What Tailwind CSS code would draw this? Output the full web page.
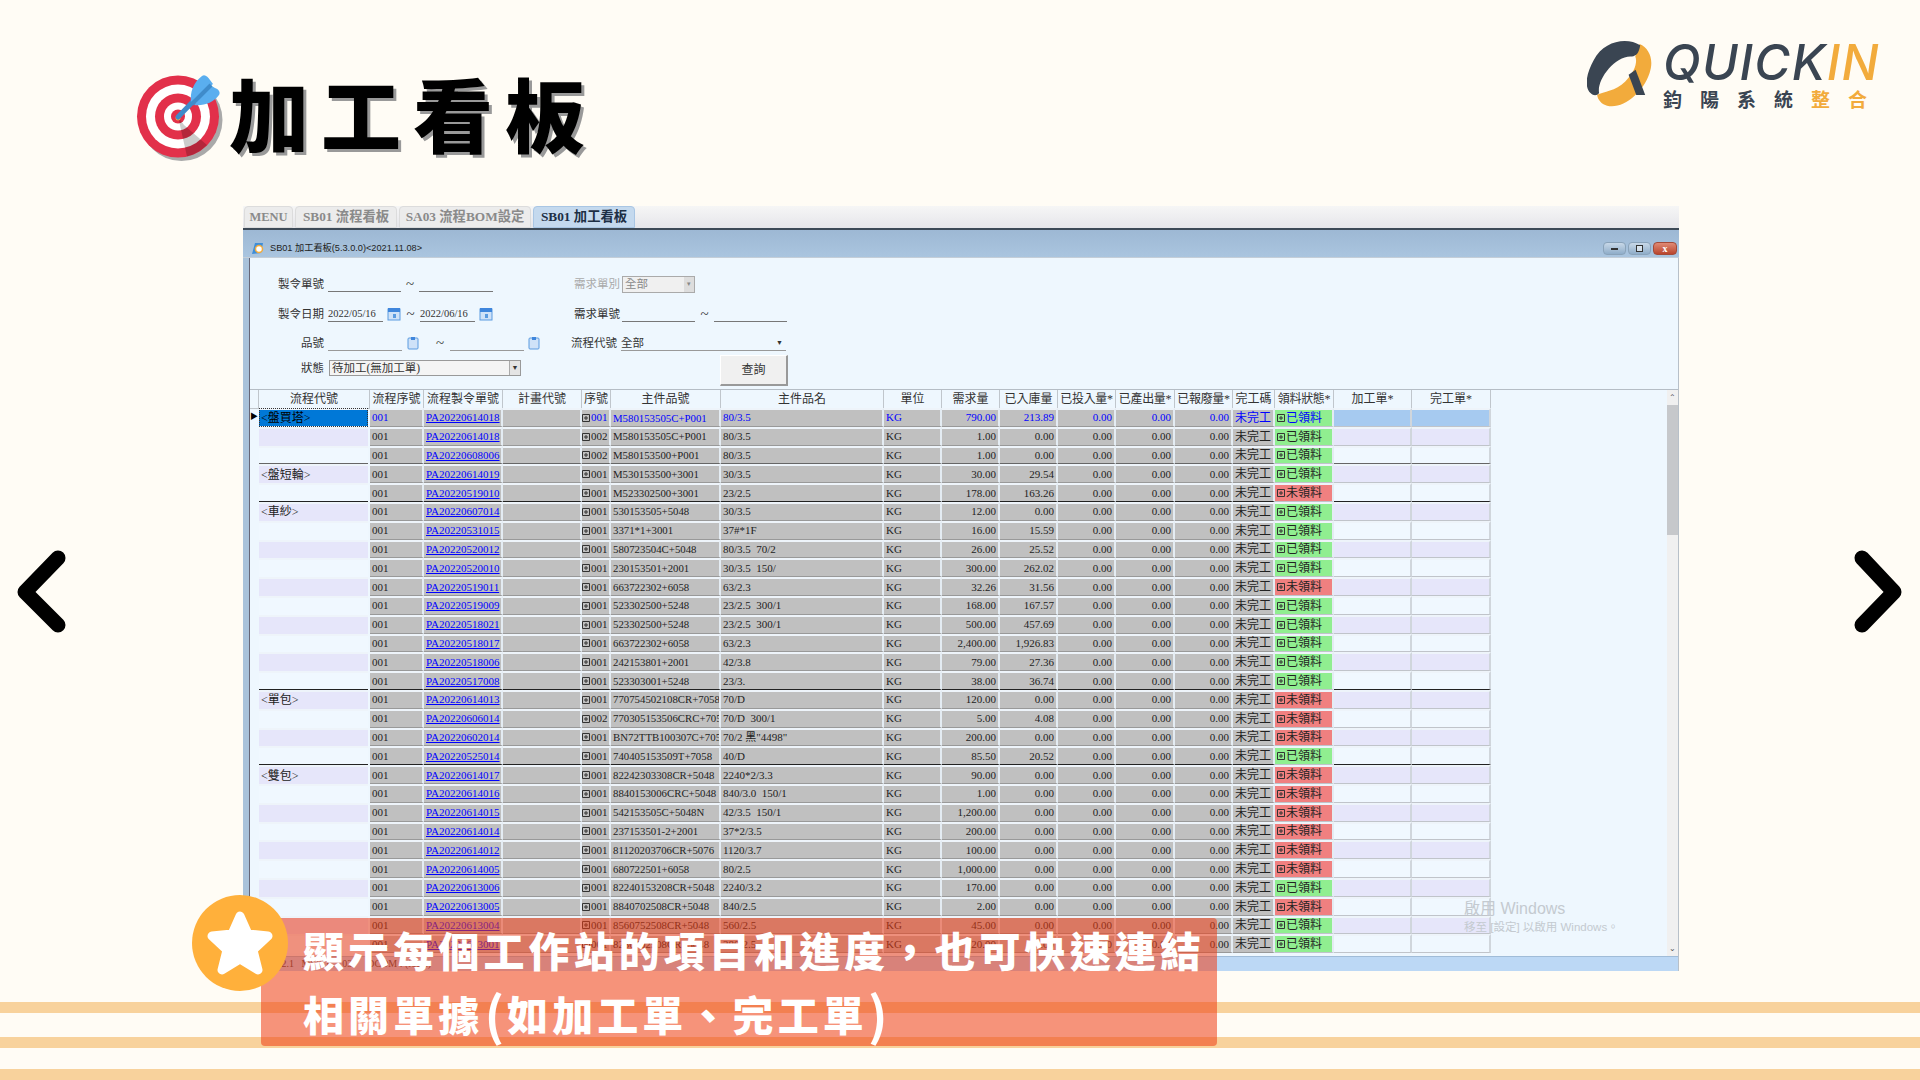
<!DOCTYPE html>
<html lang="zh-Hant">
<head>
<meta charset="utf-8">
<script src="https://cdn.jsdelivr.net/npm/@tailwindcss/browser@4"></script>
</head>
<body class="m-0">
<div class="relative w-[1920px] h-[1080px] overflow-hidden bg-[#fffcf5] [font-family:'Noto_Sans_CJK_TC',sans-serif]">

  <!-- stripes -->
  <div class="absolute left-0 right-0 top-[1002px] h-[11px] bg-[#f8d29c]"></div>
  <div class="absolute left-0 right-0 top-[1037px] h-[11px] bg-[#f8d29c]"></div>
  <div class="absolute left-0 right-0 top-[1069px] h-[11px] bg-[#f8d29c]"></div>

  <!-- header -->
  <header class="relative h-[206px] flex justify-between items-start">
    <div class="flex items-center pl-[130px] pt-[65px]">
      <svg width="100" height="100" viewBox="130 65 100 100" class="shrink-0">
        <circle cx="181.5" cy="120" r="41" fill="#a9a9a9"/>
        <circle cx="178" cy="116.500" r="41" fill="#e2304a"/>
        <circle cx="178" cy="116.500" r="32" fill="#fff"/>
        <circle cx="178" cy="116.500" r="23" fill="#e2304a"/>
        <circle cx="178" cy="116.500" r="14" fill="#fff"/>
        <circle cx="178" cy="116.500" r="7" fill="#e2304a"/>
        <path d="M178 116.500 L184 125 L207 145 A41 41 0 0 1 187 156.500 Z" fill="#000" opacity=".2"/>
        <circle cx="178" cy="118" r="2.500" fill="#f5a53a"/>
        <path d="M178 117 L209 85" stroke="#3f8bca" stroke-width="5" stroke-linecap="round"/>
        <path d="M191 102 C190 92 193 83 202 76 C205 74 208 77 210 80 L213 84 Z" fill="#5aaeef"/>
        <path d="M194 105 C204 106 213 103 219 95 C221 92 218 89 215 88 L210 85 Z" fill="#5aaeef"/>
        <path d="M192 104 L211 85" stroke="#3f8bca" stroke-width="4"/>
      </svg>
      <h1 class="-ml-[1px] -mt-[9px] text-[80px] leading-[100px] font-black tracking-[12px] text-black [text-shadow:3px_3px_0_#999] whitespace-nowrap">加工看板</h1>
    </div>
    <div class="flex pt-[40px] w-[333px]">
      <svg width="65" height="67" viewBox="80 60 195 202" class="shrink-0">
        <path d="M238 72 C268 85 282 120 268 160 C250 215 190 270 140 258 C125 254 112 242 110 225 C130 215 165 215 195 185 C225 155 232 125 225 110 Z" fill="#f2ab3c"/>
        <path d="M240 76 C200 50 130 62 100 120 C78 160 70 200 90 220 C100 230 110 228 116 220 C108 180 165 105 215 110 C228 108 236 100 240 76 Z" fill="#3a4552"/>
        <path d="M205 165 L226 150 L255 226 L228 226 Z" fill="#3a4552"/>
      </svg>
      <div class="ml-[11px] flex flex-col">
        <div class="h-[49px] text-[49px] leading-[45px] italic font-medium text-[#3a4552] [font-family:Inter,sans-serif] tracking-[1.400px] whitespace-nowrap">QUICK<span class="text-[#f2ab3c]">IN</span></div>
        <div class="text-[19px] leading-[20px] font-bold text-[#3a4552] tracking-[18px] whitespace-nowrap">鈞陽系統<span class="text-[#f2ab3c]">整合</span></div>
      </div>
    </div>
  </header>

  <!-- window screenshot -->
  <section class="relative ml-[243px] w-[1436px] h-[765px] flex flex-col text-[#222] [font-family:'Liberation_Serif','Noto_Sans_CJK_TC',serif]">
    <!-- tabs -->
    <div class="h-[24px] shrink-0 flex items-end bg-gradient-to-b from-[#f6f6f6] to-[#e6e6ea] pl-px gap-[2px] border-b-2 border-[#3d4a57]">
      <div class="w-[49px] h-[22px] flex items-center justify-center text-[12.500px] font-bold text-[#8a8a8a] bg-[#ececec] border border-[#dcdcdc] rounded-t-sm">MENU</div>
      <div class="w-[102px] h-[22px] flex items-center justify-center text-[13.300px] font-bold text-[#8a8a8a] bg-[#ececec] border border-[#dcdcdc] rounded-t-sm whitespace-nowrap">SB01 流程看板</div>
      <div class="w-[132px] h-[22px] flex items-center justify-center text-[13.300px] font-bold text-[#8a8a8a] bg-[#ececec] border border-[#dcdcdc] rounded-t-sm whitespace-nowrap">SA03 流程BOM設定</div>
      <div class="w-[102px] h-[22px] flex items-center justify-center text-[13.300px] font-bold text-[#1d2f45] bg-[#c4d9ee] border border-[#a9c6e4] rounded-t-sm whitespace-nowrap">SB01 加工看板</div>
    </div>
    <!-- title bar -->
    <div class="h-[28px] shrink-0 flex items-center bg-gradient-to-b from-[#9db8d4] to-[#aac5df] pt-[10px] pl-[8px] pr-[2px] border-b border-[#c4ced8]">
      <svg width="14" height="14" viewBox="0 0 14 14" class="shrink-0"><path d="M4 1 L12 1 L10 11 L1 12 Z" fill="#3f8ed8"/><circle cx="8" cy="7" r="3.500" fill="#fff" stroke="#f2ab3c" stroke-width="1.500"/></svg>
      <span class="ml-[5px] text-[9.200px] text-[#222] [font-family:'Liberation_Sans','Noto_Sans_CJK_TC',sans-serif] whitespace-nowrap">SB01 加工看板(5.3.0.0)&lt;2021.11.08&gt;</span>
      <div class="ml-auto flex gap-[2px]">
        <div class="w-[23px] h-[13px] rounded-sm bg-gradient-to-b from-[#c8d8e8] to-[#8fadc9] border border-[#8aa3ba] flex items-center justify-center"><div class="w-[7px] h-[2px] bg-[#333]"></div></div>
        <div class="w-[23px] h-[13px] rounded-sm bg-gradient-to-b from-[#c8d8e8] to-[#8fadc9] border border-[#8aa3ba] flex items-center justify-center"><div class="w-[7px] h-[7px] border border-[#333] bg-white/50"></div></div>
        <div class="w-[24px] h-[13px] rounded-sm bg-gradient-to-b from-[#e08a74] to-[#b9442c] border border-[#a34a38] flex items-center justify-center text-white text-[10px] leading-none font-bold">x</div>
      </div>
    </div>

    <div class="flex-1 min-h-0 flex">
      <!-- left frame -->
      <div class="w-[7px] shrink-0 bg-[#a9c2da] border-r border-[#667]"></div>
      <div class="flex-1 min-w-0 flex flex-col border-r border-[#b7c0c9]">
        <!-- form -->
        <div class="h-[132px] shrink-0 bg-[#eef7fe] border-b border-[#b5bdc5] pt-[18px] text-[11.500px] leading-[16px] text-[#333] flex flex-col">
          <div class="h-[16px] flex items-center">
            <span class="w-[74px] text-right whitespace-nowrap">製令單號</span>
            <span class="ml-[4px] w-[73px] h-[16px] border-b border-[#777]"></span>
            <span class="w-[18px] text-center text-[15px]">~</span>
            <span class="w-[74px] h-[16px] border-b border-[#777]"></span>
            <span class="ml-[81px] w-[44px] text-right text-[#aaa] whitespace-nowrap">需求單別</span>
            <span class="ml-[4px] w-[73px] h-[17px] bg-[#f0f0f0] border border-[#aaa] flex items-center justify-between pl-[2px] text-[#888]">全部<span class="w-[10px] h-[15px] bg-[#ddd] text-[7px] text-center leading-[15px]">▾</span></span>
          </div>
          <div class="h-[16px] mt-[14px] flex items-center">
            <span class="w-[74px] text-right whitespace-nowrap">製令日期</span>
            <span class="ml-[4px] w-[55px] h-[16px] border-b border-[#777] text-[10.500px]">2022/05/16</span>
            <svg class="ml-[4px] shrink-0" width="14" height="14" viewBox="0 0 14 14"><rect x="1" y="2" width="12" height="11" fill="#cfe2f8" stroke="#5b9be0"/><rect x="1" y="1" width="12" height="4" fill="#3f86dc"/><rect x="6" y="7" width="3" height="4" fill="#5b9be0"/></svg>
            <span class="w-[19px] text-center text-[15px]">~</span>
            <span class="w-[55px] h-[16px] border-b border-[#777] text-[10.500px]">2022/06/16</span>
            <svg class="ml-[4px] shrink-0" width="14" height="14" viewBox="0 0 14 14"><rect x="1" y="2" width="12" height="11" fill="#cfe2f8" stroke="#5b9be0"/><rect x="1" y="1" width="12" height="4" fill="#3f86dc"/><rect x="6" y="7" width="3" height="4" fill="#5b9be0"/></svg>
            <span class="ml-[81px] w-[44px] text-right whitespace-nowrap">需求單號</span>
            <span class="ml-[4px] w-[73px] h-[16px] border-b border-[#777]"></span>
            <span class="w-[19px] text-center text-[15px]">~</span>
            <span class="w-[73px] h-[16px] border-b border-[#777]"></span>
          </div>
          <div class="h-[16px] mt-[13px] flex items-center">
            <span class="w-[74px] text-right whitespace-nowrap">品號</span>
            <span class="ml-[4px] w-[74px] h-[16px] border-b border-[#999]"></span>
            <svg class="ml-[5px] shrink-0" width="12" height="14" viewBox="0 0 12 14"><rect x="1" y="2" width="10" height="11" rx="1" fill="#cfe2f8" stroke="#5b9be0"/><rect x="4" y="1" width="4" height="3" fill="#3f86dc"/></svg>
            <span class="w-[31px] pl-[11px] text-center text-[15px]">~</span>
            <span class="w-[74px] h-[16px] border-b border-[#999]"></span>
            <svg class="ml-[4px] shrink-0" width="12" height="14" viewBox="0 0 12 14"><rect x="1" y="2" width="10" height="11" rx="1" fill="#cfe2f8" stroke="#5b9be0"/><rect x="4" y="1" width="4" height="3" fill="#3f86dc"/></svg>
            <span class="ml-[28px] w-[49px] text-right whitespace-nowrap">流程代號</span>
            <span class="ml-[4px] w-[165px] h-[16px] border-b border-[#999] flex items-center justify-between pr-[3px]">全部<span class="text-[7px]">▼</span></span>
          </div>
          <div class="h-[16px] mt-[9px] flex items-start">
            <span class="w-[74px] text-right whitespace-nowrap">狀態</span>
            <span class="ml-[5px] w-[192px] h-[16px] bg-[#f4f4f4] border border-[#999] flex items-center justify-between pl-[2px]">待加工(無加工單)<span class="w-[11px] h-[14px] bg-[#e4e4e4] border-l border-[#aaa] text-[7px] text-center leading-[14px]">▼</span></span>
            <span class="ml-[199px] -mt-[5px] w-[68px] h-[31px] bg-[#f0f0f0] border-r-2 border-b-2 border-[#999] border-t border-l border-t-[#fff] border-l-[#fff] flex items-center justify-center text-[12px]">查詢</span>
          </div>
        </div>

        <!-- table + scrollbar -->
        <div class="flex-1 min-h-0 flex bg-[#eef7fe]">
          <div class="flex-1 min-w-0">
            <div class="grid grid-cols-[9px_111px_54px_79px_79px_29px_110px_163px_58px_58px_58px_58px_59px_58px_42px_59px_78px_79px] h-[18px] text-[12px] text-[#333] text-center leading-[18px] whitespace-nowrap">
              <div class="border-r border-b border-[#c0c6cc]"></div>
              <div class="border-r border-b border-[#c0c6cc]">流程代號</div>
              <div class="border-r border-b border-[#c0c6cc]">流程序號</div>
              <div class="border-r border-b border-[#c0c6cc]">流程製令單號</div>
              <div class="border-r border-b border-[#c0c6cc]">計畫代號</div>
              <div class="border-r border-b border-[#c0c6cc]">序號</div>
              <div class="border-r border-b border-[#c0c6cc]">主件品號</div>
              <div class="border-r border-b border-[#c0c6cc]">主件品名</div>
              <div class="border-r border-b border-[#c0c6cc]">單位</div>
              <div class="border-r border-b border-[#c0c6cc]">需求量</div>
              <div class="border-r border-b border-[#c0c6cc]">已入庫量</div>
              <div class="border-r border-b border-[#c0c6cc] tracking-[-0.3px]">已投入量*</div>
              <div class="border-r border-b border-[#c0c6cc] tracking-[-0.3px]">已產出量*</div>
              <div class="border-r border-b border-[#c0c6cc] tracking-[-0.3px]">已報廢量*</div>
              <div class="border-r border-b border-[#c0c6cc]">完工碼</div>
              <div class="border-r border-b border-[#c0c6cc] tracking-[-0.3px]">領料狀態*</div>
              <div class="border-r border-b border-[#c0c6cc]">加工單*</div>
              <div class="border-r border-b border-[#c0c6cc]">完工單*</div>
            </div>
            <div id="rows"></div>
          </div>
          <!-- scrollbar -->
          <div class="relative w-[11px] shrink-0 bg-[#f0f0f0] flex flex-col items-center text-[8px] leading-[15px] text-[#555]">
            <span class="h-[15px]">⌃</span>
            <div class="w-full h-[130px] bg-[#c6c8cb]"></div>
            <span class="mt-auto h-[15px]">⌄</span>
          </div>
        </div>
        <!-- status band -->
        <div class="h-[15px] shrink-0 bg-[#bcd8f5] border-t border-[#a0bcd8] text-[10px] leading-[14px] pl-[24px] text-[#444] whitespace-nowrap">8.2.1 &nbsp; MSSQL / 03 &nbsp;&nbsp;&nbsp;&nbsp; DCOM : (local)</div>
      </div>
    </div>

    <!-- activation watermark -->
    <div class="absolute left-[1221px] top-[693px] text-[#c4cad0] [font-family:'Liberation_Sans','Noto_Sans_CJK_TC',sans-serif] whitespace-nowrap">
      <div class="text-[16px] leading-[20px]">啟用 Windows</div>
      <div class="text-[11.500px] leading-[16px]">移至 [設定] 以啟用 Windows。</div>
    </div>
  </section>

  <!-- callout -->
  <div class="absolute left-[261px] top-[918px] w-[956px] h-[128px] rounded-[4px] bg-[#ee3c14]/55 pl-[42px] text-white text-[41px] font-black leading-[64px] tracking-[4.100px] whitespace-nowrap">
    <div class="-mt-[1px]">顯示每個工作站的項目和進度，也可快速連結</div>
    <div class="h-[64px] flex items-center">相關單據<span class="text-[52px] font-bold leading-none tracking-[0px] ml-[1px] mr-[3px]">(</span>如加工單、完工單<span class="text-[52px] font-bold leading-none tracking-[0px]">)</span></div>
  </div>
  <div class="absolute left-[192px] top-[895px] w-[96px] h-[96px] rounded-full bg-[#ffb03b] flex items-center justify-center">
    <svg width="70" height="66" viewBox="0 0 70 66"><path d="M35 6 L43 24 L63 26 L48 40 L53 60 L35 49 L17 60 L22 40 L7 26 L27 24 Z" fill="#fff" stroke="#fff" stroke-width="9" stroke-linejoin="round"/></svg>
  </div>

  <!-- nav chevrons -->
  <svg class="absolute left-[10px] top-[545px]" width="70" height="95" viewBox="0 0 70 95"><path d="M48 13 L15 47 L48 80" fill="none" stroke="#000" stroke-width="15" stroke-linecap="round" stroke-linejoin="round"/></svg>
  <svg class="absolute left-[1839px] top-[545px]" width="70" height="95" viewBox="0 0 70 95"><path d="M23 13 L55 47 L23 80" fill="none" stroke="#000" stroke-width="15" stroke-linecap="round" stroke-linejoin="round"/></svg>
</div>

<script>
var G='已',N='未';
var data=[
['<盤買塔>','PA20220614018','001','M580153505C+P001','80/3.5','790.00','213.89',G],
['','PA20220614018','002','M580153505C+P001','80/3.5','1.00','0.00',G],
['','PA20220608006','002','M580153500+P001','80/3.5','1.00','0.00',G],
['<盤短輪>','PA20220614019','001','M530153500+3001','30/3.5','30.00','29.54',G],
['','PA20220519010','001','M523302500+3001','23/2.5','178.00','163.26',N],
['<車紗>','PA20220607014','001','530153505+5048','30/3.5','12.00','0.00',G],
['','PA20220531015','001','3371*1+3001','37#*1F','16.00','15.59',G],
['','PA20220520012','001','580723504C+5048','80/3.5  70/2','26.00','25.52',G],
['','PA20220520010','001','230153501+2001','30/3.5  150/','300.00','262.02',G],
['','PA20220519011','001','663722302+6058','63/2.3','32.26','31.56',N],
['','PA20220519009','001','523302500+5248','23/2.5  300/1','168.00','167.57',G],
['','PA20220518021','001','523302500+5248','23/2.5  300/1','500.00','457.69',G],
['','PA20220518017','001','663722302+6058','63/2.3','2,400.00','1,926.83',G],
['','PA20220518006','001','242153801+2001','42/3.8','79.00','27.36',G],
['','PA20220517008','001','523303001+5248','23/3.','38.00','36.74',G],
['<單包>','PA20220614013','001','770754502108CR+7058','70/D','120.00','0.00',N],
['','PA20220606014','002','770305153506CRC+705','70/D  300/1','5.00','4.08',N],
['','PA20220602014','001','BN72TTB100307C+705','70/2 黑"4498"','200.00','0.00',N],
['','PA20220525014','001','740405153509T+7058','40/D','85.50','20.52',G],
['<雙包>','PA20220614017','001','82242303308CR+5048','2240*2/3.3','90.00','0.00',N],
['','PA20220614016','001','8840153006CRC+5048','840/3.0  150/1','1.00','0.00',N],
['','PA20220614015','001','542153505C+5048N','42/3.5  150/1','1,200.00','0.00',N],
['','PA20220614014','001','237153501-2+2001','37*2/3.5','200.00','0.00',N],
['','PA20220614012','001','81120203706CR+5076','1120/3.7','100.00','0.00',N],
['','PA20220614005','001','680722501+6058','80/2.5','1,000.00','0.00',N],
['','PA20220613006','001','82240153208CR+5048','2240/3.2','170.00','0.00',G],
['','PA20220613005','001','8840702508CR+5048','840/2.5','2.00','0.00',N],
['','PA20220613004','001','8560752508CR+5048','560/2.5','45.00','0.00',G],
['','PA20220613001','001','8280702508CR+5048','280/2.5','20.00','0.00',G]
];
var esc=function(s){return s.replace(/&/g,'&amp;').replace(/</g,'&lt;').replace(/>/g,'&gt;');};
var box='<svg class="shrink-0 mr-[1px]" width="8" height="8" viewBox="0 0 8 8"><path d="M.5.5h7v7h-7z M4 2v4 M2 4h4" fill="none" stroke="#333"/></svg>';
var html='';
data.forEach(function(r,i){
  var first=i===0;
  var bb=(i===4||i===14||i===18)?'border-b-[#222]':(i===2?'border-b-[#666]':'border-b-[#999]');
  var gray='h-full min-w-0 overflow-hidden px-[2px] flex items-center bg-[#c0c0c0] border-t-2 border-t-[#eef4fa] border-r-2 border-r-[#e4ecf3] border-b '+bb+' ';
  var tint=i%2===1?'bg-[#e6e6fa]':'bg-[#f0f8ff]';
  var blank='h-full border-t-2 border-t-[#eef4fa] border-r-2 border-r-[#d0d6dc] border-b '+(bb==='border-b-[#999]'?'border-b-[#c0c4ca]':bb)+' '+(first?'bg-[#a6caf0]':tint);
  var tc=first?'text-[#0000ff]':'text-[#222]';
  var nm=gray+'justify-end '+tc;
  var c1=first
    ?'<div class="h-full flex items-center pl-[2px] text-[12px] border-t-2 border-t-[#eef4fa] border-b border-b-[#eef4fa] mr-[2px] bg-[#0078d7] text-black outline outline-1 -outline-offset-1 outline-dotted outline-[#333]">'+esc(r[0])+'</div>'
    :'<div class="h-full flex items-center pl-[2px] text-[12px] border-t-2 border-t-[#eef4fa] mr-[2px] '+tint+' '+(bb==='border-b-[#999]'?'':'border-b '+bb)+'">'+esc(r[0])+'</div>';
  var st=r[7]===G
    ?'<div class="h-full min-w-0 overflow-hidden flex items-center pl-[2px] text-[12px] border-t-2 border-t-[#eef4fa] border-r-2 border-r-[#e4ecf3] border-b border-b-[#c0c4ca] bg-[#90ee90] '+(first?'text-[#0000ff]':'text-[#222]')+'">'+box+'已領料</div>'
    :'<div class="h-full min-w-0 overflow-hidden flex items-center pl-[2px] text-[12px] border-t-2 border-t-[#eef4fa] border-r-2 border-r-[#e4ecf3] border-b border-b-[#c0c4ca] bg-[#f08080] text-[#222]">'+box+'未領料</div>';
  html+='<div class="grid grid-cols-[9px_111px_54px_79px_79px_29px_110px_163px_58px_58px_58px_58px_59px_58px_42px_59px_78px_79px] h-[18.800px] text-[11px] leading-none whitespace-pre">'
   +'<div class="h-full flex items-center text-[8px] text-black">'+(first?'▶':'')+'</div>'
   +c1
   +'<div class="'+gray+tc+'">001</div>'
   +'<div class="'+gray+'text-[#0000ff] underline">'+r[1]+'</div>'
   +'<div class="'+gray+'"></div>'
   +'<div class="'+gray+'!px-0 '+tc+'">'+box+r[2]+'</div>'
   +'<div class="'+gray+'text-[10.800px] '+tc+'">'+r[3]+'</div>'
   +'<div class="'+gray+tc+'">'+r[4]+'</div>'
   +'<div class="'+gray+tc+'">KG</div>'
   +'<div class="'+nm+'">'+r[5]+'</div>'
   +'<div class="'+nm+'">'+r[6]+'</div>'
   +'<div class="'+nm+'">0.00</div>'
   +'<div class="'+nm+'">0.00</div>'
   +'<div class="'+nm+'">0.00</div>'
   +'<div class="'+gray+'text-[12px] '+tc+'">未完工</div>'
   +st
   +'<div class="'+blank+'"></div>'
   +'<div class="'+blank+'"></div>'
   +'</div>';
});
document.getElementById('rows').innerHTML=html;
</script>
</body>
</html>
